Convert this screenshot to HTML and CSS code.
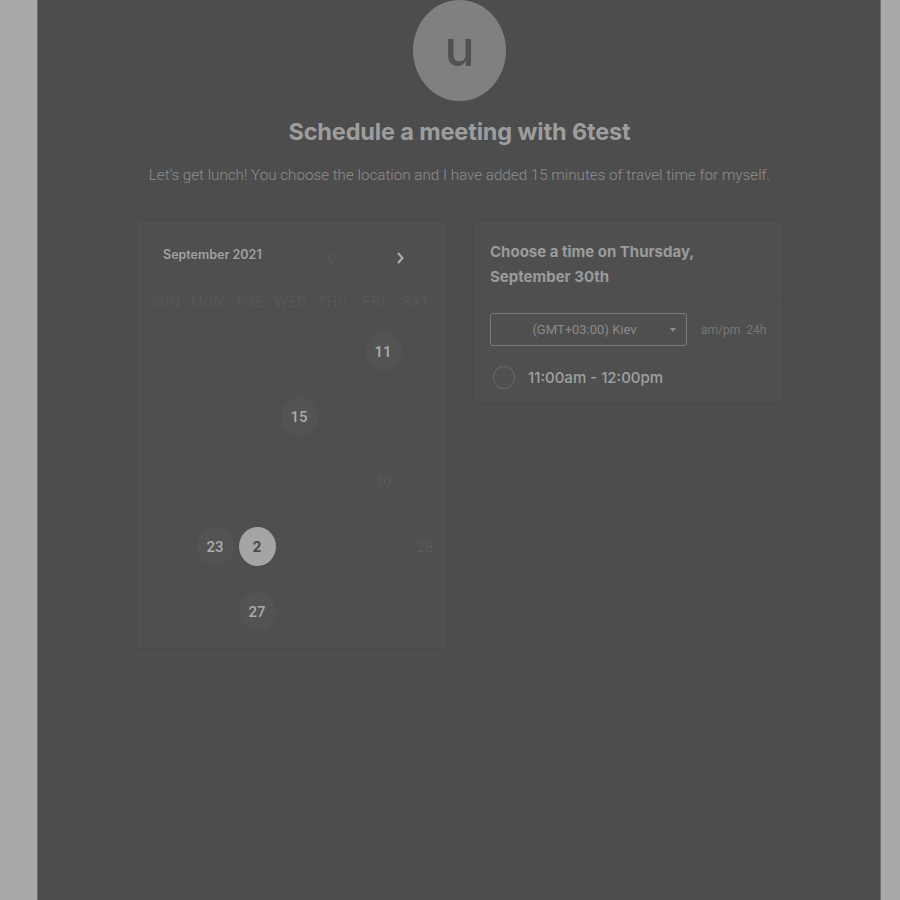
FILE: index.html
```html
<!DOCTYPE html>
<html lang="en">
<head>
<meta charset="utf-8">
<title>Schedule a meeting with 6test</title>
<link rel="stylesheet" href="styles.css">
</head>
<body>
<div class="panel">
  <div class="avatar">u</div>
  <h1 class="title">Schedule a meeting with 6test</h1>
  <p class="subtitle">Let’s get lunch! You choose the location and I have added 15 minutes of travel time for myself.</p>
  <div class="cards">
    <div class="card calendar">
      <div class="cal-head">
        <span class="month">September 2021</span>
        <span class="nav">
          <svg class="arrow prev" width="10" height="14" viewBox="0 0 10 14"><path d="M7 2 L2.5 7 L7 12" fill="none" stroke="currentColor" stroke-width="1.6"/></svg>
          <svg class="arrow next" width="10" height="14" viewBox="0 0 10 14"><path d="M3 2 L7.5 7 L3 12" fill="none" stroke="currentColor" stroke-width="2"/></svg>
        </span>
      </div>
      <div class="weekdays">
        <span>SUN</span><span>MON</span><span>TUE</span><span>WED</span><span>THU</span><span>FRI</span><span>SAT</span>
      </div>
      <div class="days">
        <span class="d">29</span><span class="d">30</span><span class="d">31</span><span class="d">1</span><span class="d">2</span><span class="d avail">11</span><span class="d">4</span>
        <span class="d">5</span><span class="d">6</span><span class="d">7</span><span class="d avail">15</span><span class="d">9</span><span class="d">10</span><span class="d">18</span>
        <span class="d">12</span><span class="d">13</span><span class="d">14</span><span class="d">15</span><span class="d">16</span><span class="d dim">19</span><span class="d">18</span>
        <span class="d">19</span><span class="d avail">23</span><span class="d selected">2</span><span class="d">22</span><span class="d">23</span><span class="d">24</span><span class="d dim">28</span>
        <span class="d">26</span><span class="d">21</span><span class="d avail">27</span><span class="d">29</span><span class="d">30</span><span class="d">2</span><span class="d">2</span>
      </div>
    </div>
    <div class="card times">
      <div class="times-head">Choose a time on Thursday, September 30th</div>
      <div class="tz-row">
        <div class="tz-select">
          <span class="tz-text">(GMT+03:00) Kiev</span>
          <span class="caret"></span>
        </div>
        <span class="fmt">am/pm&nbsp; 24h</span>
      </div>
      <div class="slot">
        <span class="radio"></span>
        <span class="slot-text">11:00am - 12:00pm</span>
      </div>
    </div>
  </div>
</div>
</body>
</html>
```
FILE: styles.css
```css
html, body {
  margin: 0;
  padding: 0;
  height: 100%;
}
body {
  background: #a9a9a9;
  padding-left: 37px;
  box-sizing: border-box;
  overflow: hidden;
}
.panel {
  width: 844px;
  height: 900px;
  box-sizing: border-box;
  background: #4d4d4d;
  border-left: 1px solid #6e6e6e;
  border-right: 1px solid #6e6e6e;
  display: flex;
  flex-direction: column;
  align-items: center;
  padding-left: 1px;
}
.avatar {
  width: 93px;
  height: 101px;
  border-radius: 50%;
  background: #808080;
  color: #525252;
  font-family: Inter, "Noto Sans", sans-serif;
  font-size: 50px;
  font-weight: 500;
  display: flex;
  align-items: center;
  justify-content: center;
  line-height: 1;
  padding-bottom: 6px;
  box-sizing: border-box;
}
.title {
  margin: 17px 0 0;
  font-family: Inter, "Noto Sans", sans-serif;
  font-size: 23.5px;
  font-weight: 700;
  line-height: 28px;
  color: #9d9d9d;
  letter-spacing: -0.15px;
}
.subtitle {
  margin: 20px 0 0;
  font-family: Roboto, "Liberation Sans", sans-serif;
  font-weight: 300;
  font-size: 15.2px;
  line-height: 18px;
  color: #8e8e8e;
}
.cards {
  margin-top: 37px;
  display: flex;
  gap: 29px;
  align-items: flex-start;
}
.card {
  background: #4f4f4f;
  box-shadow: 0 0 3px rgba(0, 0, 0, 0.1);
  border: 1px solid #515151;
  box-sizing: border-box;
}
.calendar {
  width: 309px;
  height: 427px;
}
.cal-head {
  display: flex;
  align-items: center;
  height: 64px;
  padding: 0 0 0 25px;
}
.month {
  font-family: Inter, "Noto Sans", sans-serif;
  font-size: 12.5px;
  font-weight: 600;
  color: #a0a0a0;
  width: 162px;
}
.nav {
  display: flex;
  align-items: center;
  gap: 60px;
  padding-top: 8px;
}
.arrow.prev { color: #595959; }
.arrow.next { color: #b0b0b0; }
.weekdays {
  display: grid;
  grid-template-columns: repeat(7, 41.7px);
  padding-left: 7px;
  height: 32px;
  align-items: center;
  font-family: Roboto, "Liberation Sans", sans-serif;
  font-size: 14px;
  font-weight: 300;
  letter-spacing: 0.8px;
  color: #5a5a5a;
}
.weekdays span {
  text-align: center;
}
.days {
  display: grid;
  grid-template-columns: repeat(7, 42px);
  grid-auto-rows: 65px;
  padding-left: 14px;
  margin-top: 1px;
}
.d {
  display: flex;
  align-items: center;
  justify-content: center;
  font-family: Roboto, "Liberation Sans", sans-serif;
  font-size: 15px;
  color: #515151;
}
.d.avail, .d.selected {
  width: 37px;
  height: 39px;
  border-radius: 50%;
  justify-self: center;
  align-self: center;
}
.d.avail {
  background: #535353;
  color: #ababab;
  font-weight: 500;
}
.d.selected {
  background: #a5a5a5;
  color: #4a4a4a;
  font-weight: 700;
  font-family: Inter, "Noto Sans", sans-serif;
  font-size: 14px;
}
.d.dim {
  color: #5e5e5e;
  font-weight: 300;
}
.times {
  width: 307px;
  height: 181px;
  padding: 0 14px;
}
.times-head {
  margin: 0 -14px;
  padding: 17px 50px 8px 14px;
  font-family: Inter, "Noto Sans", sans-serif;
  font-size: 15px;
  font-weight: 700;
  line-height: 25px;
  color: #9b9b9b;
  border-bottom: 1px solid #4d4d4d;
  height: 76px;
  box-sizing: border-box;
}
.tz-row {
  display: flex;
  align-items: center;
  margin-top: 15px;
  gap: 14px;
  white-space: nowrap;
}
.tz-select {
  flex: none;
  width: 197px;
  height: 33px;
  border: 1px solid #7b7b7b;
  border-radius: 3px;
  box-sizing: border-box;
  display: flex;
  align-items: center;
  font-family: Roboto, "Liberation Sans", sans-serif;
  font-size: 13px;
  color: #8a8a8a;
}
.tz-text {
  flex: 1;
  text-align: center;
  padding-left: 8px;
}
.caret {
  width: 0;
  height: 0;
  border-left: 3.5px solid transparent;
  border-right: 3.5px solid transparent;
  border-top: 4px solid #8e8e8e;
  margin-right: 10px;
}
.fmt {
  font-family: Roboto, "Liberation Sans", sans-serif;
  font-size: 12px;
  color: #777777;
}
.slot {
  display: flex;
  align-items: center;
  gap: 13px;
  margin-top: 20px;
  padding-left: 3px;
}
.radio {
  width: 22px;
  height: 23px;
  border-radius: 50%;
  border: 1px solid #686868;
  box-sizing: border-box;
}
.slot-text {
  font-family: Inter, "Noto Sans", sans-serif;
  font-size: 15px;
  font-weight: 500;
  color: #a0a0a0;
}
```
